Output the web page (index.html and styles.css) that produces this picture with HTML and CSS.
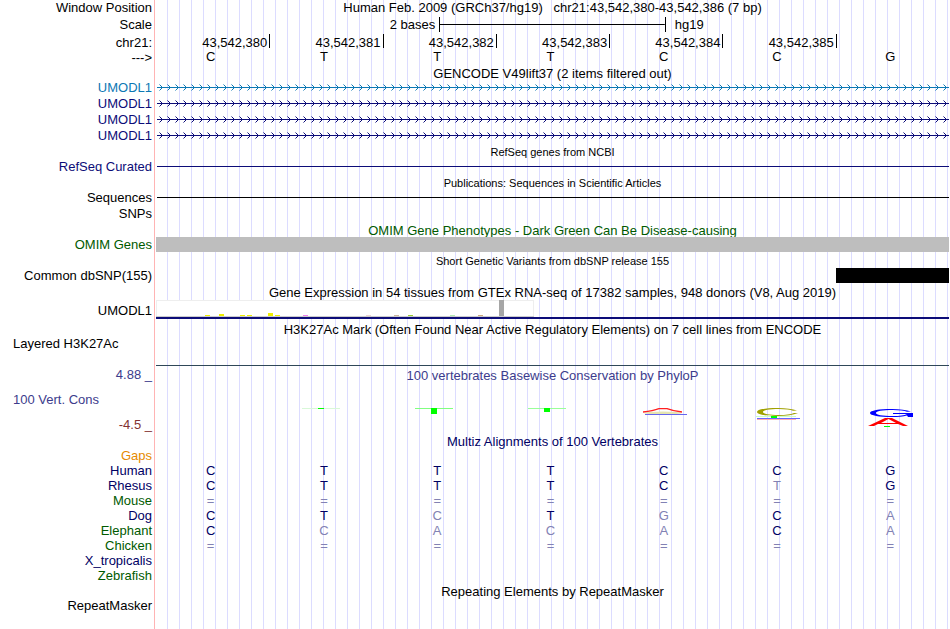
FILE: index.html
```html
<!DOCTYPE html>
<html lang="en">
<head>
<meta charset="utf-8">
<title>chr21:43,542,380-43,542,386 - Genome Browser</title>
<link rel="stylesheet" href="styles.css">
</head>
<body>
<svg class="defs" width="0" height="0" aria-hidden="true">
  <defs>
    <pattern id="strand-blue" x="3" y="0" width="8" height="7" patternUnits="userSpaceOnUse">
      <g fill="#0c78b4"><path d="M1 1h1v1h-1zM2 2h1v1h-1zM1 5h1v1h-1zM2 4h1v1h-1zM3 3h1v1h-1z"/><path opacity=".5" d="M0 0h1v1h-1zM0 6h1v1h-1z"/></g>
    </pattern>
    <pattern id="strand-navy" x="3" y="0" width="8" height="7" patternUnits="userSpaceOnUse">
      <g fill="#0c0c78"><path d="M1 1h1v1h-1zM2 2h1v1h-1zM1 5h1v1h-1zM2 4h1v1h-1zM3 3h1v1h-1z"/><path opacity=".5" d="M0 0h1v1h-1zM0 6h1v1h-1z"/></g>
    </pattern>
  </defs>
</svg>
<main class="browser">
  <section>
    <div class="row"><div class="label">Window Position</div><h1 class="title">Human Feb. 2009 (GRCh37/hg19) &nbsp; chr21:43,542,380-43,542,386 (7 bp)</h1></div>
    <div class="row scale-row"><div class="label">Scale</div>
      <div class="scale"><span class="scale-size">2 bases</span><span class="scale-bar"></span><span class="scale-db">hg19</span></div></div>
    <div class="row ruler-row"><div class="label">chr21:</div>
      <div class="ruler"><span>43,542,380</span><span>43,542,381</span><span>43,542,382</span><span>43,542,383</span><span>43,542,384</span><span>43,542,385</span><span></span></div></div>
    <div class="row"><div class="label">---&gt;</div>
      <div class="bases"><span>C</span><span>T</span><span>T</span><span>T</span><span>C</span><span>C</span><span>G</span></div></div>
  </section>

  <section>
    <h2 class="title track-title tight-title">GENCODE V49lift37 (2 items filtered out)</h2>
    <div class="row"><div class="label blue">UMODL1</div><svg class="gene" height="7"><rect width="100%" height="7" fill="url(#strand-blue)"/><rect x="1" y="3" width="100%" height="1" fill="#0c78b4"/></svg></div>
    <div class="row"><div class="label navy">UMODL1</div><svg class="gene" height="7"><rect width="100%" height="7" fill="url(#strand-navy)"/><rect x="1" y="3" width="100%" height="1" fill="#0c0c78"/></svg></div>
    <div class="row"><div class="label navy">UMODL1</div><svg class="gene" height="7"><rect width="100%" height="7" fill="url(#strand-navy)"/><rect x="1" y="3" width="100%" height="1" fill="#0c0c78"/></svg></div>
    <div class="row"><div class="label navy">UMODL1</div><svg class="gene" height="7"><rect width="100%" height="7" fill="url(#strand-navy)"/><rect x="1" y="3" width="100%" height="1" fill="#0c0c78"/></svg></div>
  </section>

  <section>
    <h2 class="title track-title small">RefSeq genes from NCBI</h2>
    <div class="row"><div class="label navy">RefSeq Curated</div><div class="line line-navy"></div></div>
  </section>

  <section>
    <h2 class="title track-title small">Publications: Sequences in Scientific Articles</h2>
    <div class="row"><div class="label">Sequences</div><div class="line"></div></div>
    <div class="row"><div class="label">SNPs</div></div>
  </section>

  <section>
    <h2 class="title track-title green">OMIM Gene Phenotypes - Dark Green Can Be Disease-causing</h2>
    <div class="row"><div class="label green">OMIM Genes</div><div class="block"></div></div>
  </section>

  <section>
    <h2 class="title track-title small">Short Genetic Variants from dbSNP release 155</h2>
    <div class="row"><div class="label">Common dbSNP(155)</div><div class="cells"><div class="block variant"></div></div></div>
  </section>

  <section>
    <h2 class="title track-title">Gene Expression in 54 tissues from GTEx RNA-seq of 17382 samples, 948 donors (V8, Aug 2019)</h2>
    <div class="row gtex"><div class="label">UMODL1</div>
      <div class="gtex-plot">
        <svg width="378" height="17" shape-rendering="crispEdges" role="img" aria-label="Expression by tissue">
          <rect width="378" height="17" fill="#eee"/><rect x="1" y="1" width="376" height="15" fill="#fff"/>
          <rect y="16" width="378" height="1" fill="#ccc"/>
          <g fill="#eeee00"><rect x="49" y="15" width="5" height="1"/><rect x="63" y="14" width="5" height="2"/><rect x="84" y="15" width="5" height="1"/><rect x="91" y="15" width="5" height="1"/><rect x="112" y="13" width="5" height="3"/><rect x="119" y="15" width="5" height="1"/></g>
          <rect x="147" y="15" width="5" height="1" fill="#ee82ee"/>
          <rect x="210" y="15" width="5" height="1" fill="#eed5d2"/>
          <rect x="238" y="15" width="5" height="1" fill="#cdb79e"/>
          <rect x="252" y="15" width="5" height="1" fill="#9acd32"/>
          <rect x="294" y="15" width="5" height="1" fill="#b4eeb4"/>
          <rect x="322" y="15" width="5" height="1" fill="#cdaa7d"/>
          <rect x="343" y="0" width="5" height="16" fill="#a6a6a6"/>
        </svg>
      </div></div>
  </section>

  <section>
    <h2 class="title track-title loose-title">H3K27Ac Mark (Often Found Near Active Regulatory Elements) on 7 cell lines from ENCODE</h2>
    <div class="row h3k"><div class="label left">Layered H3K27Ac</div><div class="h3k-plot"></div></div>
  </section>

  <section class="row phylop">
    <div class="phylop-labels"><div class="label indigo">4.88 _</div><div class="label left indigo">100 Vert. Cons</div><div class="label maroon">-4.5 _</div></div>
    <div class="phylop-plot">
      <h2 class="title indigo">100 vertebrates Basewise Conservation by PhyloP</h2>
      <div class="bases logos">
        <span></span>
        <span><svg width="48" height="24"><path fill="#d8f8d8" d="M2 2h38v1h-38z"/><path fill="#00ff00" d="M18 2h6v1h-6z"/></svg></span>
        <span><svg width="48" height="24"><path fill="#80ff80" d="M2 2h38v1h-38z"/><path fill="#00ff00" d="M18 2h6v6h-6z"/></svg></span>
        <span><svg width="48" height="24"><path fill="#99ff99" d="M2 2h38v1h-38z"/><path fill="#00ff00" d="M18 2h6v4h-6z"/></svg></span>
        <span><svg width="48" height="24"><ellipse cx="23" cy="7" rx="19" ry="1.5" fill="#e4e4b0"/><path fill="none" stroke="#ff2020" stroke-width="1.3" d="M3 6Q13 5 19 2.700H27Q33 5 42 6"/><path fill="#6666ee" d="M5 8h42v1h-42z"/></svg></span>
        <span><svg width="48" height="24"><path fill="#a0a000" fill-rule="evenodd" d="M44 4.500Q37 2 25 2C12 2 4 3.500 4 6S12 10 25 10Q38 10 45 7L41 7Q36 9 26 9C16 9 10 8 10 6S16 3 26 3Q36 3 40 4.700z"/><path fill="#c8ffc8" d="M3 10h40v1h-40z"/><path fill="#00ff00" d="M18 10h6v2h-6z"/><path fill="#6666ff" d="M4 12h43v1h-43z"/><path fill="#ffb0b0" d="M4 13h39v1h-39z"/></svg></span>
        <span><svg width="48" height="24"><path fill="#0000ff" d="M45 5.500Q38 3 26 3C13 3 4 4.500 4 7S13 11 26 11Q35 11 41 9.500L42 11H47V7H27V8H41Q37 10 27 10C16 10 10 9 10 7S16 4 27 4Q37 4 41 5.700z"/><path fill="#ff0000" fill-rule="evenodd" d="M2 20L19 12H26L42 20H37L32 18H12L8 20zM15 17H30L22.500 13z"/><path fill="#00ff00" d="M18 20h6v1h-6z"/></svg></span>
      </div>
    </div>
  </section>

  <section>
    <h2 class="title track-title species tight-title">Multiz Alignments of 100 Vertebrates</h2>
    <table class="alignment">
      <tbody>
        <tr><th scope="row" class="orange">Gaps</th><td></td><td></td><td></td><td></td><td></td><td></td><td></td></tr>
        <tr><th scope="row">Human</th><td>C</td><td>T</td><td>T</td><td>T</td><td>C</td><td>C</td><td>G</td></tr>
        <tr><th scope="row">Rhesus</th><td>C</td><td>T</td><td>T</td><td>T</td><td>C</td><td class="dim">T</td><td>G</td></tr>
        <tr class="dim-row"><th scope="row" class="green">Mouse</th><td>=</td><td>=</td><td>=</td><td>=</td><td>=</td><td>=</td><td>=</td></tr>
        <tr><th scope="row">Dog</th><td>C</td><td>T</td><td class="dim">C</td><td>T</td><td class="dim">G</td><td>C</td><td class="dim">A</td></tr>
        <tr><th scope="row" class="green">Elephant</th><td>C</td><td class="dim">C</td><td class="dim">A</td><td class="dim">C</td><td class="dim">A</td><td>C</td><td class="dim">A</td></tr>
        <tr class="dim-row"><th scope="row" class="green">Chicken</th><td>=</td><td>=</td><td>=</td><td>=</td><td>=</td><td>=</td><td>=</td></tr>
        <tr><th scope="row">X_tropicalis</th><td></td><td></td><td></td><td></td><td></td><td></td><td></td></tr>
        <tr><th scope="row" class="green">Zebrafish</th><td></td><td></td><td></td><td></td><td></td><td></td><td></td></tr>
      </tbody>
    </table>
  </section>

  <section>
    <h2 class="title track-title">Repeating Elements by RepeatMasker</h2>
    <div class="row"><div class="label">RepeatMasker</div></div>
  </section>
</main>
</body>
</html>
```
FILE: styles.css
```css
* { box-sizing: border-box; }

body {
  margin: 0;
  background: #fff;
  color: #000;
  font: 13px/16px "Liberation Sans", Arial, sans-serif;
}

svg { display: block; }
.defs { position: absolute; }

/* Label gutter with its pink divider, then the vertical guide lines. */
.browser {
  min-height: 100vh;
  padding-right: 1px;
  background:
    linear-gradient(to right, #fff 0 154px, #ffb4b4 154px 155px, #fff 155px 156px, transparent 156px),
    repeating-linear-gradient(to right, transparent 0 11px, #dcdcff 11px 12px);
}

.row {
  display: grid;
  grid-template-columns: 156px minmax(0, 1fr);
  min-height: 16px;
}

.label {
  padding-right: 4px;
  text-align: right;
  white-space: nowrap;
}
.label.left { padding-left: 13px; text-align: left; }

.title {
  margin: 0;
  font-size: 13px;
  font-weight: normal;
  line-height: 15px;
  text-align: center;
  white-space: nowrap;
}
.track-title {
  margin-left: 156px;
  padding-top: 2px;
  line-height: 13px;
}
.tight-title { line-height: 12px; }
.loose-title { padding-top: 3px; }
.small { font-size: 11px; }

.blue { color: #0c78b4; }
.navy { color: #0c0c78; }
.green { color: #005a00; }
.indigo { color: #3c3c8c; }
.maroon { color: #823232; }
.orange { color: #e68a00; }

/* Position ruler */
.scale-row { padding-top: 1px; min-height: 18px; }
.scale {
  display: grid;
  grid-template-columns: 5fr 4fr 5fr;
  line-height: 15px;
}
.scale-size { padding-right: 4px; text-align: right; }
.scale-db { padding-left: 9px; }
.scale-bar {
  height: 15px;
  border: solid #000;
  border-width: 0 1px;
  background: linear-gradient(#000, #000) center / 100% 1px no-repeat;
}

.ruler, .cells, .bases {
  display: grid;
  grid-template-columns: repeat(7, minmax(0, 1fr));
}
.ruler-row .label { padding-top: 2px; line-height: 14px; }
.ruler span {
  height: 14px;
  padding: 2px 2px 0 0;
  line-height: 14px;
  text-align: right;
}
.ruler span + span { border-left: 1px solid #000; }

.bases {
  margin: 0 2px 0 -2px;
  line-height: 14px;
  text-align: center;
}

/* Track items */
.gene { width: 100%; margin-top: 4px; }
.line {
  height: 1px;
  margin: 7px 0 0 1px;
  background: #000;
}
.line-navy { background: #0c0c78; }
.block { height: 15px; background: #bebebe; }
.variant { grid-column: 7; background: #000; }

.gtex { padding-top: 1px; min-height: 21px; }
.gtex .label { padding-top: 3px; }
.gtex-plot { align-self: start; border-bottom: 2px solid #0c0c78; }

.h3k { min-height: 30px; }
.h3k-plot { border-bottom: 1px solid #2f4858; }

.phylop { min-height: 68px; }
.phylop-labels {
  display: flex;
  flex-direction: column;
  justify-content: space-between;
  padding: 1px 0;
}
.phylop-plot {
  display: flex;
  flex-direction: column;
  justify-content: space-between;
  padding: 2px 0 4px;
}
.logos svg { margin: 0 auto; }

/* Alignment */
.species, .alignment { color: #000064; }
.alignment {
  width: calc(100% - 2px);
  border-collapse: collapse;
  table-layout: fixed;
  line-height: 15px;
}
.alignment th, .alignment td {
  padding: 0;
  height: 15px;
  font-weight: normal;
  text-align: center;
}
.alignment th {
  width: 154px;
  padding-right: 2px;
  text-align: right;
}
.alignment .green { color: #005a00; }
.alignment .orange { color: #e68a00; }
.alignment .dim, .dim-row td { color: #8282b4; }
```
